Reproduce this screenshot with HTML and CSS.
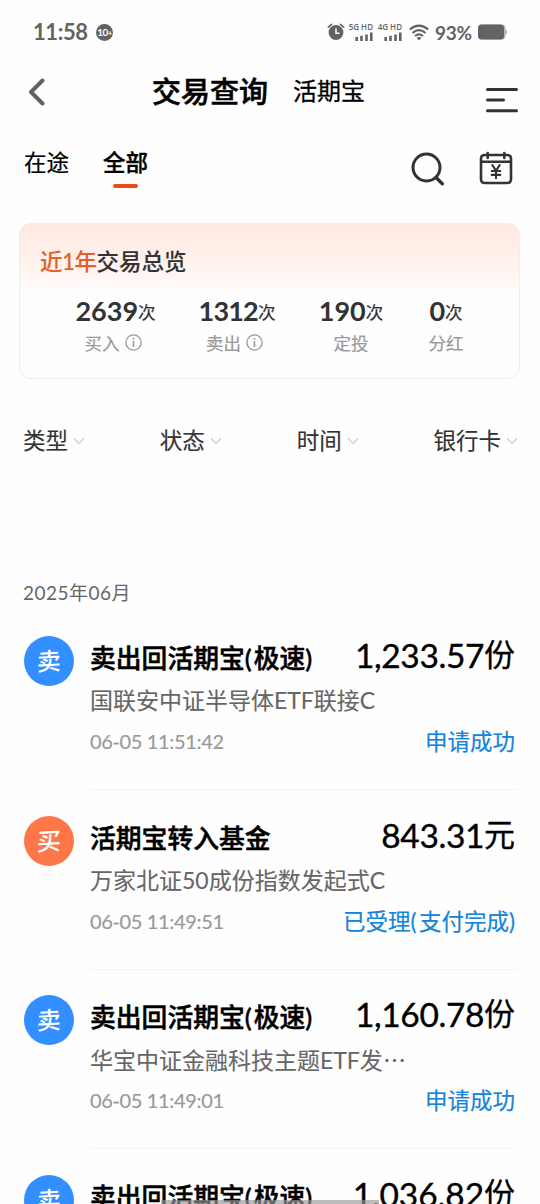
FILE: index.html
```html
<!DOCTYPE html>
<html lang="zh-CN">
<head>
<meta charset="utf-8">
<title>交易查询</title>
<link rel="stylesheet" href="styles.css">
</head>
<body>
<main class="screen">
  <div class="status">
    <span class="clock">11:58</span>
    <span class="ten">10<i>+</i></span>
    <svg class="alarm" width="18" height="20" viewBox="0 0 18 20"><circle cx="9" cy="10.5" r="7.4" fill="#636363"/><path d="M1.3 5.2 4.6 2.3M13.4 2.3l3.3 2.9" stroke="#636363" stroke-width="1.6" stroke-linecap="round"/><path d="M9 6.2v5h3.4" fill="none" stroke="#fff" stroke-width="1.5"/></svg>
    <div class="net n1"><b>5G HD</b><svg width="18" height="9" viewBox="0 0 18 9"><path d="M1.7 9V5M6.5 9V3.8M11.5 9V2.4M16.3 9V.5" stroke="#636363" stroke-width="2.6"/></svg></div>
    <div class="net n2"><b>4G HD</b><svg width="18" height="9" viewBox="0 0 18 9"><path d="M1.7 9V5M6.5 9V3.8M11.5 9V2.4M16.3 9V.5" stroke="#636363" stroke-width="2.6"/></svg></div>
    <svg class="wifi" width="20" height="17" viewBox="0 0 20 17"><g fill="none" stroke="#636363" stroke-width="2.2"><path d="M.8 5.500Q10-2.300 19.200 5.500"/><path d="M3.500 9Q10 3.400 16.500 9"/><path d="M6 12Q10 8.600 14 12"/></g><path d="M7.500 13.800Q10 12 12.500 13.800L10 16.500z" fill="#636363"/></svg>
    <span class="pct">93%</span>
    <svg class="battery" width="30" height="16" viewBox="0 0 30 16"><path d="M26 5.200h1.800q1.200 0 1.200 1.300v3q0 1.300-1.200 1.300H26z" fill="#c8c8c8"/><rect x="0" y=".5" width="27.500" height="15" rx="4" fill="#b5b5b5"/><rect x="0" y=".5" width="26" height="15" rx="3.500" fill="#636363"/></svg>
  </div>

  <header class="header">
    <svg class="back" width="17" height="28" viewBox="0 0 17 28"><path d="M14.500 2.500 3 14 14.500 25.500" fill="none" stroke="#626262" stroke-width="4" stroke-linecap="round" stroke-linejoin="round"/></svg>
    <h1>交易查询</h1>
    <span class="product">活期宝</span>
    <svg class="menu" width="32" height="26" viewBox="0 0 32 26"><path d="M1.500 2.500h29M1.500 13h16M1.500 23.700h29" stroke="#333" stroke-width="3" stroke-linecap="round"/></svg>
  </header>

  <nav class="tabs">
    <span class="tab">在途</span>
    <span class="tab active">全部</span>
    <svg class="search" width="34" height="34" viewBox="0 0 34 34"><circle cx="15.500" cy="15.500" r="13.500" fill="none" stroke="#333" stroke-width="3"/><path d="m25.300 25.800 6 6" stroke="#333" stroke-width="3.400" stroke-linecap="round"/></svg>
    <svg class="calendar" width="34" height="34" viewBox="0 0 34 34"><g fill="none" stroke="#333" stroke-width="2.600" stroke-linecap="round"><rect x="2" y="4" width="30" height="28" rx="3.500"/><path d="M2.500 10.700h29M8.700 2v5M25.300 2v5"/><path d="m13.300 14.200 3.700 5.300 3.700-5.300M12.700 20h8.600M12.700 23.900h8.600M17 19.800v7.500" stroke-width="2.100"/></g></svg>
  </nav>

  <section class="summary">
    <h2><em>近1年</em>交易总览</h2>
    <div class="stats">
      <div class="stat s1"><p><b>2639</b>次</p><small>买入<svg width="17" height="17" viewBox="0 0 17 17"><circle cx="8.500" cy="8.500" r="7.600" fill="none" stroke="#999" stroke-width="1.300"/><path d="M8.500 7v6M8.500 4v1.800" stroke="#999" stroke-width="1.600"/></svg></small></div>
      <div class="stat s2"><p><b>1312</b>次</p><small>卖出<svg width="17" height="17" viewBox="0 0 17 17"><circle cx="8.500" cy="8.500" r="7.600" fill="none" stroke="#999" stroke-width="1.300"/><path d="M8.500 7v6M8.500 4v1.800" stroke="#999" stroke-width="1.600"/></svg></small></div>
      <div class="stat s3"><p><b>190</b>次</p><small>定投</small></div>
      <div class="stat s4"><p><b>0</b>次</p><small>分红</small></div>
    </div>
  </section>

  <div class="filters">
    <span>类型<svg width="12" height="8" viewBox="0 0 12 8"><path d="m1 1.500 5 5 5-5"/></svg></span>
    <span>状态<svg width="12" height="8" viewBox="0 0 12 8"><path d="m1 1.500 5 5 5-5"/></svg></span>
    <span>时间<svg width="12" height="8" viewBox="0 0 12 8"><path d="m1 1.500 5 5 5-5"/></svg></span>
    <span>银行卡<svg width="12" height="8" viewBox="0 0 12 8"><path d="m1 1.500 5 5 5-5"/></svg></span>
  </div>

  <div class="month">2025年06月</div>

  <article class="row">
    <div class="badge sell"><span>卖</span></div>
    <div class="body">
      <div class="line top"><h3>卖出回活期宝<i>(</i>极速<i>)</i></h3><span class="amount">1,233.57<i>份</i></span></div>
      <div class="fund">国联安中证半导体ETF联接C</div>
      <div class="line foot"><time>06-05 11:51:42</time><span class="state">申请成功</span></div>
    </div>
  </article>
  <article class="row">
    <div class="badge buy"><span>买</span></div>
    <div class="body">
      <div class="line top"><h3>活期宝转入基金</h3><span class="amount">843.31<i>元</i></span></div>
      <div class="fund">万家北证50成份指数发起式C</div>
      <div class="line foot"><time>06-05 11:49:51</time><span class="state">已受理<i>(</i>支付完成<i>)</i></span></div>
    </div>
  </article>
  <article class="row">
    <div class="badge sell"><span>卖</span></div>
    <div class="body">
      <div class="line top"><h3>卖出回活期宝<i>(</i>极速<i>)</i></h3><span class="amount">1,160.78<i>份</i></span></div>
      <div class="fund">华宝中证金融科技主题ETF发<span class="dots">⋯</span></div>
      <div class="line foot"><time>06-05 11:49:01</time><span class="state">申请成功</span></div>
    </div>
  </article>
  <article class="row">
    <div class="badge sell"><span>卖</span></div>
    <div class="body">
      <div class="line top"><h3>卖出回活期宝<i>(</i>极速<i>)</i></h3><span class="amount wide">1,036.82<i>份</i></span></div>
    </div>
  </article>
  <div class="home-bar"></div>
</main>
</body>
</html>
```

FILE: styles.css
```css
* { box-sizing: border-box; margin: 0; padding: 0; }
html, body { height: 1204px; overflow: hidden; }
body { background: #fefefe; font-family: Lato, "Noto Sans CJK SC", sans-serif; color: #000; }
i, em { font-style: normal; }
svg { display: block; flex: none; }
.screen { position: relative; width: 540px; height: 1204px; overflow: hidden; white-space: nowrap; }

.status { display: flex; align-items: center; height: 64px; padding: 0 32px 0 33px; color: #636363; }
.clock { font-size: 22px; font-weight: 700; width: 63px; line-height: 24px; letter-spacing: -.4px; }
.ten { width: 17px; height: 17px; border-radius: 50%; background: #636363; color: #fff; font-size: 10px; font-weight: 700; line-height: 17px; letter-spacing: -.5px; text-align: center; }
.ten i { font-size: 8px; }
.alarm { margin-left: 214px; }
.net { display: flex; flex-direction: column; align-items: flex-end; width: 25px; height: 20px; margin-left: 3px; }
.net b { font: 600 8px/10px "Open Sans", sans-serif; }
.net.n2 { margin-left: 4px; }
.wifi { margin-left: 7px; }
.pct { font-size: 19px; font-weight: 700; margin-left: 6px; width: 43px; line-height: 24px; padding-top: 2px; letter-spacing: -.3px; }

.header { display: flex; align-items: center; height: 56px; padding: 0 22px 0 28px; }
.header h1 { margin-left: 107px; font-size: 29px; line-height: 40px; font-weight: 500; -webkit-text-stroke: .55px #000; }
.product { margin: -2px 0 0 25px; font-size: 24px; line-height: 36px; -webkit-text-stroke: .3px #000; }
.menu { margin: 15px 0 0 auto; }

.tabs { display: flex; align-items: center; height: 88px; padding: 0 27px 0 24px; }
.tab { font-size: 22.500px; line-height: 32px; margin-top: -1px; height: 34px; -webkit-text-stroke: .2px #000; }
.tab.active { position: relative; margin-left: 34px; font-weight: 500; -webkit-text-stroke: .4px #000; }
.tab.active::after { content: ""; position: absolute; left: 10px; top: 37px; width: 25px; height: 4px; border-radius: 2px; background: #e84d16; }
.search { margin: 9px 0 0 auto; }
.calendar { margin: 8px 0 0 34px; }

.summary { width: 501px; height: 156px; margin: 15px 0 0 19px; padding: 21px 20px 0; border: 1px solid #f8ece7; border-radius: 12px; background: linear-gradient(#ffe8e0, #fff5f1 32%, #fefefe 46%); }
.summary h2 { font-size: 22.500px; line-height: 34px; font-weight: 500; color: #333; -webkit-text-stroke: .1px; }
.summary em { color: #e2602a; letter-spacing: -.5px; }
.stats { display: flex; margin-top: 12px; }
.stat { display: flex; flex-direction: column; align-items: center; }
.s1 { width: 81px; margin-left: 35px; }
.s2 { width: 74px; margin-left: 44px; }
.s3 { width: 64px; margin-left: 45px; }
.s4 { width: 36px; margin-left: 45px; }
.stat p { display: flex; align-items: center; height: 40px; font-size: 17.500px; color: #333; -webkit-text-stroke: .2px; }
.stat b { font-size: 27px; line-height: 40px; -webkit-text-stroke: 0; }
.s2 b { letter-spacing: -.8px; }
.stat small { display: flex; align-items: center; height: 22px; font-size: 17.500px; color: #999; -webkit-text-stroke: .2px; }
.stat small svg { margin-left: 5px; }
.s1 small, .s2 small { margin-left: -5px; }

.filters { display: flex; justify-content: space-between; align-items: center; height: 34px; margin-top: 45px; padding: 0 22px 0 23px; }
.filters span { display: flex; align-items: center; font-size: 22.500px; line-height: 34px; color: #333; -webkit-text-stroke: .15px; }
.filters svg { margin-left: 5px; }
.filters path { fill: none; stroke: #ccc; stroke-width: 1.200; }

.month { height: 30px; margin: 121px 0 0 23px; font-size: 19px; line-height: 28px; color: #666; letter-spacing: .5px; }

.row { display: flex; height: 179.500px; padding: 0 24px; }
.month + .row { margin-top: 22px; }
.badge { display: flex; justify-content: center; align-items: center; width: 50px; height: 50px; margin-top: 5px; border-radius: 50%; color: #fff; font-size: 24px; font-weight: 500; line-height: 34px; }
.badge span { transform: rotate(-3deg) skewX(-4deg); }
.sell { background: #338fff; }
.buy { background: #ff7748; }
.body { width: 426px; margin-left: 16px; border-bottom: 1px solid #f3f3f3; height: 159px; }
.line { display: flex; justify-content: space-between; }
.top { height: 49px; }
.top h3 { font-size: 25.800px; line-height: 54px; font-weight: 500; -webkit-text-stroke: .5px #000; }
.top h3 i { letter-spacing: 2px; }
.amount { display: flex; font-size: 33.500px; line-height: 48px; margin-right: 1px; letter-spacing: -.4px; -webkit-text-stroke: .35px; }
.amount.wide { letter-spacing: -.1px; }
.amount i { font-size: 31px; line-height: 46px; letter-spacing: 0; -webkit-text-stroke: .3px; }
.fund { height: 42px; font-size: 23px; line-height: 40px; color: #666; -webkit-text-stroke: .1px; }
.dots { font-family: "Noto Sans CJK SC", sans-serif; }
.foot { height: 42px; line-height: 40px; }
.foot time { font-size: 20px; line-height: 38px; color: #999; letter-spacing: -.35px; -webkit-text-stroke: .15px; }
.state { font-size: 22.500px; margin-right: 1px; color: #1684da; -webkit-text-stroke: .2px; }
.state i { letter-spacing: 2.500px; }
.state i:last-child { letter-spacing: 0; }
.home-bar { position: absolute; left: 161px; bottom: 0; width: 218px; height: 4px; background: rgba(150, 150, 150, .65); }
```
